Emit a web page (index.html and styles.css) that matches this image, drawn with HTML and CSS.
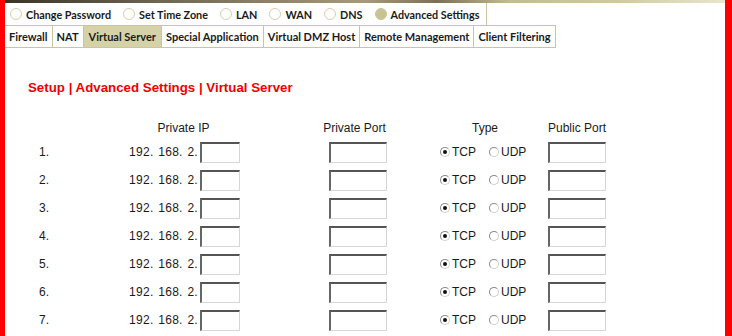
FILE: index.html
```html
<!DOCTYPE html>
<html>
<head>
<meta charset="utf-8">
<link rel="stylesheet" href="styles.css">
</head>
<body>
<div class="page">
  <div class="bar bar-left"></div>
  <div class="main">
    <div class="banner"></div>
    <div class="topnav">
      <span class="nav-item"><span class="nav-radio"></span>Change Password</span>
      <span class="nav-item"><span class="nav-radio"></span>Set Time Zone</span>
      <span class="nav-item"><span class="nav-radio"></span>LAN</span>
      <span class="nav-item"><span class="nav-radio"></span>WAN</span>
      <span class="nav-item"><span class="nav-radio"></span>DNS</span>
      <span class="nav-item"><span class="nav-radio nav-radio-on"></span>Advanced Settings</span>
    </div>
    <div class="tabs">
      <span class="tab">Firewall</span>
      <span class="tab">NAT</span>
      <span class="tab tab-active">Virtual Server</span>
      <span class="tab">Special Application</span>
      <span class="tab">Virtual DMZ Host</span>
      <span class="tab">Remote Management</span>
      <span class="tab">Client Filtering</span>
    </div>
    <h1 class="crumb">Setup | Advanced Settings | Virtual Server</h1>
    <div class="vs-table">
      <div class="hdr c-ip">Private IP</div>
      <div class="hdr c-port">Private Port</div>
      <div class="hdr c-type">Type</div>
      <div class="hdr c-pub">Public Port</div>

      <div class="cell c-num">1.</div>
      <div class="cell c-ip"><span class="ip">192. 168. 2.</span><span class="field f-ip"></span></div>
      <div class="cell c-port"><span class="field f-port"></span></div>
      <div class="cell c-type"><span class="rd rd-on"></span><span class="rl">TCP</span><span class="rd"></span><span class="rl">UDP</span></div>
      <div class="cell c-pub"><span class="field f-port"></span></div>

      <div class="cell c-num">2.</div>
      <div class="cell c-ip"><span class="ip">192. 168. 2.</span><span class="field f-ip"></span></div>
      <div class="cell c-port"><span class="field f-port"></span></div>
      <div class="cell c-type"><span class="rd rd-on"></span><span class="rl">TCP</span><span class="rd"></span><span class="rl">UDP</span></div>
      <div class="cell c-pub"><span class="field f-port"></span></div>

      <div class="cell c-num">3.</div>
      <div class="cell c-ip"><span class="ip">192. 168. 2.</span><span class="field f-ip"></span></div>
      <div class="cell c-port"><span class="field f-port"></span></div>
      <div class="cell c-type"><span class="rd rd-on"></span><span class="rl">TCP</span><span class="rd"></span><span class="rl">UDP</span></div>
      <div class="cell c-pub"><span class="field f-port"></span></div>

      <div class="cell c-num">4.</div>
      <div class="cell c-ip"><span class="ip">192. 168. 2.</span><span class="field f-ip"></span></div>
      <div class="cell c-port"><span class="field f-port"></span></div>
      <div class="cell c-type"><span class="rd rd-on"></span><span class="rl">TCP</span><span class="rd"></span><span class="rl">UDP</span></div>
      <div class="cell c-pub"><span class="field f-port"></span></div>

      <div class="cell c-num">5.</div>
      <div class="cell c-ip"><span class="ip">192. 168. 2.</span><span class="field f-ip"></span></div>
      <div class="cell c-port"><span class="field f-port"></span></div>
      <div class="cell c-type"><span class="rd rd-on"></span><span class="rl">TCP</span><span class="rd"></span><span class="rl">UDP</span></div>
      <div class="cell c-pub"><span class="field f-port"></span></div>

      <div class="cell c-num">6.</div>
      <div class="cell c-ip"><span class="ip">192. 168. 2.</span><span class="field f-ip"></span></div>
      <div class="cell c-port"><span class="field f-port"></span></div>
      <div class="cell c-type"><span class="rd rd-on"></span><span class="rl">TCP</span><span class="rd"></span><span class="rl">UDP</span></div>
      <div class="cell c-pub"><span class="field f-port"></span></div>

      <div class="cell c-num">7.</div>
      <div class="cell c-ip"><span class="ip">192. 168. 2.</span><span class="field f-ip"></span></div>
      <div class="cell c-port"><span class="field f-port"></span></div>
      <div class="cell c-type"><span class="rd rd-on"></span><span class="rl">TCP</span><span class="rd"></span><span class="rl">UDP</span></div>
      <div class="cell c-pub"><span class="field f-port"></span></div>
    </div>
  </div>
  <div class="bar bar-right"></div>
</div>
</body>
</html>
```
FILE: styles.css
```css
html, body {
  margin: 0;
  padding: 0;
  background: #fff;
}
.page {
  display: flex;
  height: 336px;
  overflow: hidden;
}
.bar { background: #ff0000; }
.bar-left { width: 5px; }
.bar-right { width: 7px; }
.main {
  flex: 1;
  min-width: 0;
  overflow: hidden;
}
.banner {
  height: 3px;
  background: linear-gradient(90deg, #3a3428 0%, #6b6250 20%, #8a7f63 35%, #a59a78 50%, #7d6f55 60%, #c2bd8e 70%, #cfcb9c 85%, #e8e6cc 100%);
}
.topnav {
  display: flex;
  align-items: center;
  width: fit-content;
  height: 22px;
  padding: 0 7px 0 5px;
  border-right: 1px solid #c9c69d;
  gap: 12px;
  font-family: Lato, "Open Sans", sans-serif;
  font-weight: 700;
  font-size: 10.8px;
  color: #1a1a1a;
}
.nav-item {
  display: flex;
  align-items: center;
  gap: 4px;
}
.nav-radio {
  width: 10px;
  height: 10px;
  border-radius: 50%;
  border: 1px solid #d3d0b0;
  background: #fff;
}
.nav-radio-on {
  background: #c8c394;
  border-color: #c8c394;
}
.tabs {
  display: flex;
  width: fit-content;
  height: 21px;
  border-top: 1px solid #c9c69d;
  border-bottom: 1px solid #c9c69d;
  font-family: Lato, "Open Sans", sans-serif;
  font-weight: 700;
  font-size: 11px;
  color: #1a1a1a;
}
.tab {
  display: flex;
  align-items: center;
  padding: 0 4px;
  border-right: 1px solid #c9c69d;
}
.tab-active {
  background: #d5d2a8;
  padding: 0 5px;
}
.crumb {
  margin: 32px 0 0 23px;
  font-family: "Liberation Sans", Arial, sans-serif;
  font-weight: 700;
  font-size: 13.3px;
  line-height: 16px;
  color: #f00000;
}
.vs-table {
  display: grid;
  margin: 22px 0 0 34px;
  grid-template-columns: 88px 113px 89px 58px 53px 90px 18px 58px;
  grid-template-rows: 20px;
  grid-auto-rows: 28px;
  font-family: "Liberation Sans", Arial, sans-serif;
  font-size: 12px;
  color: #1a1a1a;
}
.hdr {
  display: flex;
  justify-content: center;
  align-items: center;
  white-space: nowrap;
}
.cell {
  display: flex;
  align-items: center;
  white-space: nowrap;
}
.c-num { grid-column: 1; }
.c-ip { grid-column: 2; }
.c-port { grid-column: 4; }
.c-type { grid-column: 6; }
.c-pub { grid-column: 8; }
.hdr.c-port { margin-right: 7px; }
.cell.c-ip { justify-content: flex-end; }
.ip {
  word-spacing: 1px;
  letter-spacing: 0.3px;
  margin-right: 2px;
}
.field {
  flex-shrink: 0;
  box-sizing: border-box;
  height: 21px;
  background: #fff;
  border-style: solid;
  border-width: 2px 1px 1px 2px;
  border-color: #555 #d6d6d6 #d6d6d6 #666;
}
.f-ip { width: 40px; }
.f-port { width: 58px; }
.rd {
  flex-shrink: 0;
  box-sizing: border-box;
  width: 10px;
  height: 10px;
  border-radius: 50%;
  border: 1px solid #8a8a8a;
  border-right-color: #d0d0d0;
  border-bottom-color: #d0d0d0;
  background: #fff;
  position: relative;
  margin-right: 2px;
}
.rd-on::after {
  content: "";
  position: absolute;
  left: 2px;
  top: 2px;
  width: 4px;
  height: 4px;
  border-radius: 50%;
  background: #111;
}
.rl { margin-right: 13px; }
.rl:last-child { margin-right: 0; }
```
